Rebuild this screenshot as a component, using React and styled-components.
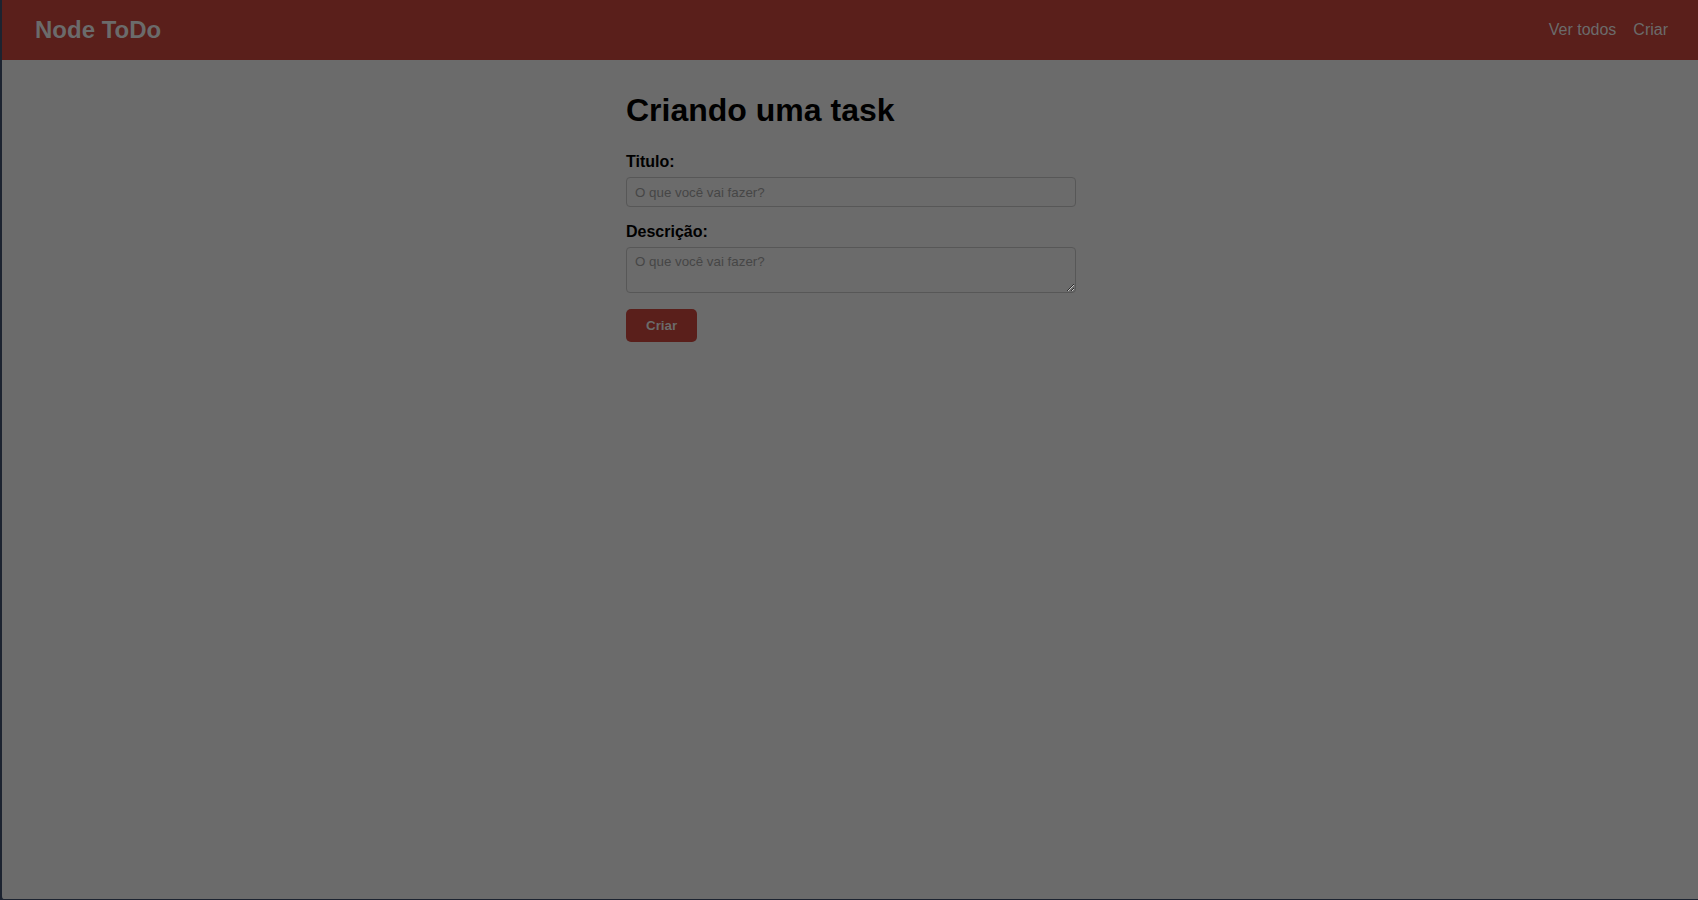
import styled, {createGlobalStyle} from "styled-components";

const GlobalStyle = createGlobalStyle`
  * {
    margin: 0;
    padding: 0;
    box-sizing: border-box;
  }
  body {
    font-family: "Liberation Sans", Arial, sans-serif;
    background: #1c2330;
  }
`

const Page = styled.div`
  height: 100vh;
  background: #6b6b6b;
  border-left: 2px solid #1c2330;
  border-bottom: 1px solid #1c2330;
  border-bottom-left-radius: 4px;
  overflow: hidden;
`

const Header = styled.header`
  height: 60px;
  background: #5a1f1b;
  display: flex;
  align-items: center;
  justify-content: space-between;
  padding: 0 30px 0 33px;
`

const Logo = styled.a`
  font-size: 24px;
  font-weight: bold;
  color: #6b6b6b;
  text-decoration: none;
`

const Nav = styled.nav`
  display: flex;
  gap: 17px;
`

const NavLink = styled.a`
  font-size: 16px;
  color: #6b6b6b;
  text-decoration: none;
`

const Main = styled.main`
  width: 450px;
  margin-left: calc(50% - 224px);
  padding-top: 32px;
`

const Title = styled.h1`
  font-size: 32px;
  font-weight: bold;
  color: #000;
  margin-bottom: 24px;
`

const Form = styled.form`
  display: flex;
  flex-direction: column;
`

const Label = styled.label`
  font-size: 16px;
  font-weight: bold;
  color: #000;
  margin-bottom: 6px;
`

const fieldCss = `
  width: 100%;
  font-family: "Liberation Sans", Arial, sans-serif;
  font-size: 13.333px;
  background: #6b6b6b;
  border: 1px solid #575757;
  border-radius: 4px;
  color: #000;
  outline: none;
  &::placeholder {
    color: #464646;
  }
`

const Input = styled.input`
  ${fieldCss}
  height: 30px;
  padding: 0 8px;
  margin-bottom: 16px;
`

const TextArea = styled.textarea`
  ${fieldCss}
  height: 46px;
  padding: 6px 8px;
  margin-bottom: 16px;
`

const Button = styled.button`
  align-self: flex-start;
  height: 33px;
  padding: 0 20px;
  background: #5a1f1b;
  color: #6b6b6b;
  border: none;
  border-radius: 5px;
  font-family: "Liberation Sans", Arial, sans-serif;
  font-size: 13.333px;
  font-weight: bold;
  cursor: pointer;
`

export default function App() {
    return (
        <>
            <GlobalStyle/>
            <Page>
                <Header>
                    <Logo href="#">Node ToDo</Logo>
                    <Nav>
                        <NavLink href="#">Ver todos</NavLink>
                        <NavLink href="#">Criar</NavLink>
                    </Nav>
                </Header>
                <Main>
                    <Title>Criando uma task</Title>
                    <Form onSubmit={e => e.preventDefault()}>
                        <Label htmlFor="title">Titulo:</Label>
                        <Input id="title" placeholder="O que você vai fazer?"/>
                        <Label htmlFor="description">Descrição:</Label>
                        <TextArea id="description" placeholder="O que você vai fazer?"/>
                        <Button type="submit">Criar</Button>
                    </Form>
                </Main>
            </Page>
        </>
    )
}
